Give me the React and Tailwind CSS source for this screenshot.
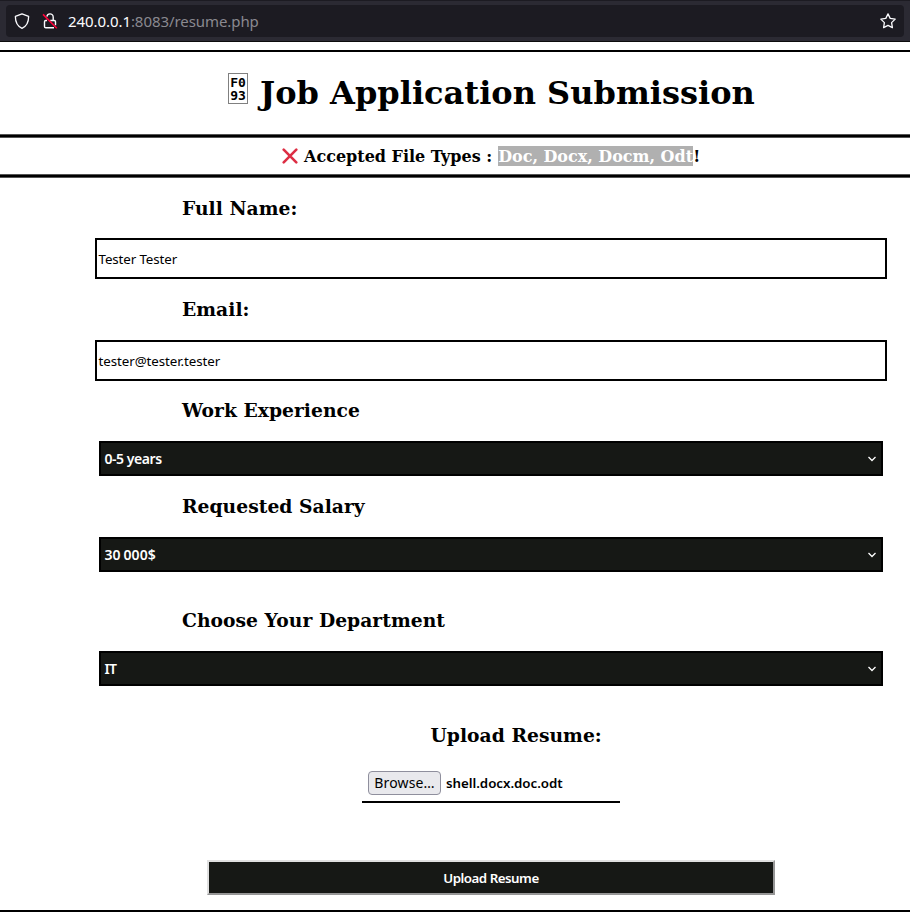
import React from "react";

const UI = "font-['Noto_Sans',sans-serif]";

function AddressBar() {
  return (
    <header className="h-[42px] shrink-0 border-t border-b border-t-[#1c1b22] border-b-[#0c0c0d] bg-[#2b2a33] pt-1 pr-[6px] pl-[6px]">
      <div className="flex h-8 items-center rounded-[4px] bg-[#1c1b22] pl-2 pr-2">
        <svg width="16" height="16" viewBox="0 0 16 16" fill="none" stroke="#fbfbfe" strokeWidth="1.3" strokeLinejoin="round">
          <path d="M8 .8 14.6 3.3C14.7 8.6 13 13 8 15.3 3 13 1.3 8.6 1.4 3.3Z" />
        </svg>
        <svg className="ml-3" width="16" height="16" viewBox="0 0 16 16" fill="none">
          <path d="M4.9 3.6C5.2 1.8 6.4.9 8 .9s3.2 1.4 3.2 3.3V7.2M8.2 7.5h4c.8 0 1.3.5 1.3 1.3v3.4M12 14.8H3.8c-.8 0-1.3-.5-1.3-1.3V8.8c0-.8.5-1.3 1.3-1.3H5" stroke="#fbfbfe" strokeWidth="1.4" />
          <path d="M1 1.4 14.8 15.2" stroke="#ff0039" strokeWidth="1.6" />
        </svg>
        <div className={`${UI} ml-[10px] text-[15px] leading-5 tracking-[-0.07px] whitespace-nowrap text-[#8a8990]`}>
          <span className="text-[#fbfbfe]">240.0.0.1</span>:8083/resume.php
        </div>
        <svg className="ml-auto" width="16" height="16" viewBox="0 0 16 16" fill="none" stroke="#fbfbfe" strokeWidth="1.3" strokeLinejoin="round">
          <path d="m8 .9 2.2 4.5 5 .7-3.6 3.5.8 5L8 12.3l-4.4 2.3.8-5L.8 6.1l5-.7Z" />
        </svg>
      </div>
    </header>
  );
}

function Heading({ className, children }) {
  return <h3 className={`text-[18.72px] leading-[22px] font-bold tracking-[0.03px] whitespace-nowrap ${className}`}>{children}</h3>;
}

function Rule() {
  return <div className="h-1 shrink-0 border-y border-[#555555] bg-black" />;
}

function Field({ className, value }) {
  return (
    <div className={`${UI} ml-[95px] flex h-[41px] w-[792px] items-center border-2 border-black pt-[2px] pl-[1.5px] text-[13.333px] ${className}`}>
      {value}
    </div>
  );
}

function Select({ value, spacing }) {
  return (
    <div className={`${UI} mt-5 ml-[99px] flex h-[35px] w-[784px] items-center border-2 border-black bg-[#161815] pr-[5px] pl-[3.5px] text-[14px] font-semibold text-white`}>
      <span className={`pb-px ${spacing}`}>{value}</span>
      <svg className="ml-auto" width="8" height="6" viewBox="0 0 8 6" fill="none" stroke="white" strokeWidth="1.3">
        <path d="M.5 1 4 4.5 7.5 1" />
      </svg>
    </div>
  );
}

export default function App() {
  return (
    <div className="flex h-[918px] w-[910px] flex-col overflow-hidden bg-white font-['DejaVu_Serif',serif] text-black">
      <AddressBar />
      <main className="mt-2 flex h-[862px] flex-col border-y-2 border-black">
        <h1 className="flex h-[82px] items-start pl-[228px] text-[32px] leading-[38px] font-bold whitespace-nowrap">
          <span className="mt-[21px] h-[31px] w-5 border border-[#808080] pt-[2px] text-center font-['DejaVu_Sans_Mono',monospace] text-[13px] leading-[13px]">
            F0<br />93
          </span>
          <span className="mt-[22px] ml-[12px] tracking-[0.02px]">Job Application Submission</span>
        </h1>
        <Rule />
        <div className="flex h-9 shrink-0 items-center pl-[282px] text-[16px] leading-5 font-bold whitespace-nowrap">
          <svg width="16" height="16" viewBox="0 0 16 16" stroke="#dd2e44" strokeWidth="2.6" strokeLinecap="round">
            <path d="m1.7 1.7 12.6 12.6M14.3 1.7 1.7 14.3" />
          </svg>
          <span className="ml-[6px] pt-px">Accepted File Types :</span>
          <span className="ml-[6px] h-5 w-[195px] bg-[#b0b0b0] leading-[21px] tracking-[-0.02px] text-white">Doc, Docx, Docm, Odt</span>
          <span className="pt-px">!</span>
        </div>
        <Rule />
        <Heading className="mt-[19px] ml-[182px]">Full Name:</Heading>
        <Field className="mt-[19px] tracking-[-0.1px]" value="Tester Tester" />
        <Heading className="mt-[19px] ml-[182px]">Email:</Heading>
        <Field className="mt-5 tracking-[-0.07px]" value="tester@tester.tester" />
        <Heading className="mt-[18px] ml-[182px]">Work Experience</Heading>
        <Select value="0-5 years" spacing="tracking-[-0.45px]" />
        <Heading className="mt-[19px] ml-[182px]">Requested Salary</Heading>
        <Select value="30 000$" spacing="tracking-[0.1px] [word-spacing:-1px]" />
        <Heading className="mt-[37px] ml-[182px]">Choose Your Department</Heading>
        <Select value="IT" spacing="tracking-[-0.6px]" />
        <Heading className="mt-[38px] ml-[430.5px]">Upload Resume:</Heading>
        <div className={`${UI} mt-[19px] ml-[362px] flex h-[38px] w-[258px] items-center border-b-2 border-black pl-[6px] text-[13.333px]`}>
          <button className="h-6 w-[73px] rounded-[4px] border border-[#8f8f9d] bg-[#e9e9ed] text-[14px] leading-[22px] tracking-[0.15px] whitespace-nowrap">Browse…</button>
          <span className="ml-[5px] pt-[2px] font-semibold tracking-[-0.04px]">shell.docx.doc.odt</span>
        </div>
        <button className={`${UI} mt-[57px] ml-[207px] h-[35px] w-[568px] border-2 border-t-[#e0e0e0] border-r-[#969696] border-b-[#969696] border-l-[#e0e0e0] bg-[#161815] pt-[2px] text-[13.333px] font-semibold tracking-[-0.5px] text-white`}>
          Upload Resume
        </button>
      </main>
    </div>
  );
}
